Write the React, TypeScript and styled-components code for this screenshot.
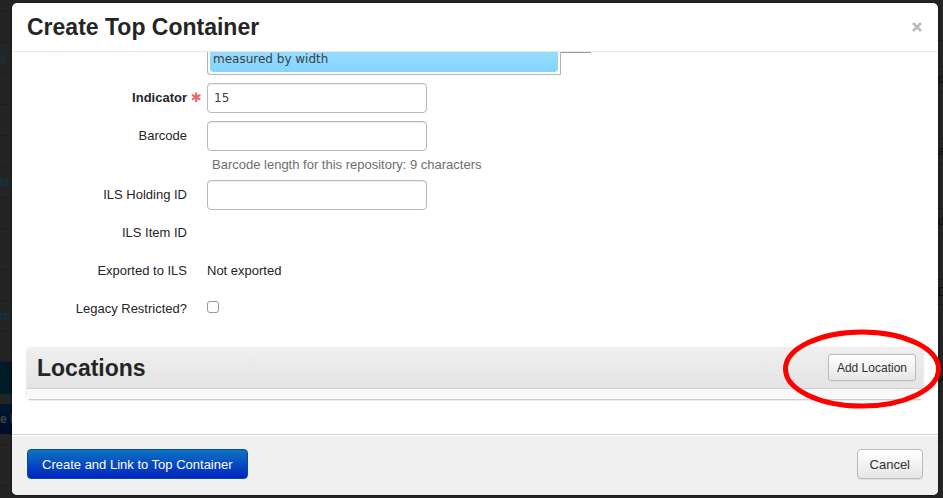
import styled, { createGlobalStyle } from "styled-components";

const App = () => {
  return (
    <Page>
      <GlobalStyle />
      <Strip aria-hidden="true">
        <StripRow $height={12} />
        <StripRow $height={31} />
        <StripRow $height={31}>s</StripRow>
        <StripRow $height={31} />
        <StripRow $height={31} />
        <StripRow $height={31} />
        <StripRow $height={31}>ts</StripRow>
        <StripRow $height={31} />
        <StripRow $height={41} />
        <StripRow $height={31} />
        <StripRow $height={31}>m</StripRow>
        <StripRow $height={30} />
        <StripBar $height={32} />
        <StripGap />
        <StripButton $height={30}>e F</StripButton>
        <StripRow $height={11} />
        <StripRow $height={41} />
      </Strip>

      <Modal role="dialog" aria-labelledby="modal-title">
        <ModalHeader>
          <Title id="modal-title">Create Top Container</Title>
          <CloseButton type="button" aria-label="Close">
            <svg width="12" height="12" viewBox="0 0 12 12">
              <path d="M2 2L10 10M10 2L2 10" stroke="#bcbcbc" strokeWidth="2.6" />
            </svg>
          </CloseButton>
        </ModalHeader>

        <ModalBody>
          <Suggestions>
            <SuggestionList role="listbox" aria-label="Container profile">
              <Suggestion role="option" aria-selected="true">measured by width</Suggestion>
            </SuggestionList>
            <FieldEdge />
          </Suggestions>

          <Form>
            <Row>
              <Label htmlFor="indicator" $required>Indicator</Label>
              <TextInput id="indicator" type="text" defaultValue="15" required />
            </Row>
            <Row>
              <Label htmlFor="barcode">Barcode</Label>
              <div>
                <TextInput id="barcode" type="text" aria-describedby="barcode-help" />
                <Help id="barcode-help">Barcode length for this repository: 9 characters</Help>
              </div>
            </Row>
            <Row>
              <Label htmlFor="holding">ILS Holding ID</Label>
              <TextInput id="holding" type="text" />
            </Row>
            <Row>
              <Label as="span">ILS Item ID</Label>
            </Row>
            <Row>
              <Label as="span">Exported to ILS</Label>
              <Value>Not exported</Value>
            </Row>
            <Row>
              <Label htmlFor="restricted">Legacy Restricted?</Label>
              <Checkbox id="restricted" type="checkbox" />
            </Row>
          </Form>

          <Panel>
            <PanelHeader>
              <Title as="h3">Locations</Title>
              <Button type="button" $small>Add Location</Button>
            </PanelHeader>
            <PanelContent />
          </Panel>
        </ModalBody>

        <ModalFooter>
          <PrimaryButton type="button">Create and Link to Top Container</PrimaryButton>
          <Button type="button">Cancel</Button>
        </ModalFooter>

        <Highlight width="160" height="82" viewBox="0 0 160 82" aria-hidden="true">
          <ellipse cx="79" cy="41" rx="76.5" ry="37" fill="none" stroke="#fe0000" strokeWidth="5" />
        </Highlight>
      </Modal>

      <Strip aria-hidden="true">
        <StripRow $height={41} />
        <StripRow $height={26} />
        <StripRow $height={25} $dark>d</StripRow>
        <StripRow $height={47} />
        <StripRow $height={25} $dark>a</StripRow>
        <StripRow $height={45} />
        <StripRow $height={25} $dark>d</StripRow>
        <StripRow $height={46} />
        <StripRow $height={25} $dark>D</StripRow>
        <StripRow $height={62} />
        <StripRow $height={25} $dark>w</StripRow>
        <StripRow $height={50} />
      </Strip>
    </Page>
  );
};

export default App;

const GlobalStyle = createGlobalStyle`
  * {
    box-sizing: border-box;
  }

  body {
    margin: 0;
    background: #222;
    color: #252525;
    font-family: "Liberation Sans", Arial, sans-serif;
    font-size: 13px;
    line-height: 20px;
  }
`;

const Page = styled.div`
  display: grid;
  grid-template-columns: 12px minmax(0, 1fr) 5px;
  min-height: 100vh;
  background: #242424;
`;

const Strip = styled.div`
  overflow: hidden;
  white-space: nowrap;
`;

const StripRow = styled.div<{ $height: number; $dark?: boolean }>`
  height: ${({ $height }) => $height}px;
  border-bottom: 1px solid #1d1d1d;
  color: ${({ $dark }) => ($dark ? "#0c0c0c" : "#0a3a50")};
  font-size: 12px;
  line-height: ${({ $height }) => $height}px;
`;

const StripBar = styled(StripRow)`
  border: 0;
  background: #001a26;
`;

const StripGap = styled.div`
  height: 10px;
`;

const StripButton = styled(StripRow)`
  border: 0;
  background: linear-gradient(#001a2c, #000a2c);
  color: #444;
  font-weight: bold;
`;

const Modal = styled.section`
  position: relative;
  display: flex;
  flex-direction: column;
  margin: 3px 0;
  border-radius: 5px;
  background: #fff;
  box-shadow: 0 0 2px #000;
`;

const ModalHeader = styled.header`
  display: flex;
  align-items: center;
  justify-content: space-between;
  height: 49px;
  padding: 0 15px;
  border-bottom: 1px solid #e8e8e8;
`;

const Title = styled.h2`
  margin: 0;
  font-size: 23px;
  line-height: 30px;
`;

const CloseButton = styled.button`
  display: flex;
  padding: 0;
  border: 0;
  background: none;
`;

const ModalBody = styled.div`
  flex: 1;
  padding: 0 15px;
`;

const Suggestions = styled.div`
  display: flex;
  padding-left: 180px;
`;

const SuggestionList = styled.ul`
  width: 354px;
  margin: 0;
  padding: 0 2px 2px;
  border: 1px solid #b4b4b4;
  border-top: 0;
  border-bottom-left-radius: 4px;
  list-style: none;
`;

const Suggestion = styled.li`
  padding: 0 3px 5px;
  border-radius: 0 0 4px 4px;
  background: linear-gradient(#97dcfe, #82d5ff);
  color: #404040;
  font-family: "DejaVu Sans", sans-serif;
  font-size: 12px;
  line-height: 15px;
`;

const FieldEdge = styled.div`
  width: 30px;
  border-top: 1px solid #999;
`;

const Form = styled.form`
  display: flex;
  flex-direction: column;
  gap: 8px;
  padding-top: 8px;
`;

const Row = styled.div`
  display: grid;
  grid-template-columns: 160px 1fr;
  align-items: start;
  column-gap: 20px;
  min-height: 30px;
`;

const Label = styled.label<{ $required?: boolean }>`
  padding-top: 5px;
  font-weight: ${({ $required }) => ($required ? "bold" : "normal")};
  text-align: right;

  &::after {
    content: ${({ $required }) => ($required ? '"✱"' : "none")};
    display: inline-block;
    width: 16px;
    margin: 0 -20px 0 4px;
    color: #e8686b;
    font-family: "DejaVu Sans", sans-serif;
    font-size: 13px;
    line-height: 12px;
    text-align: left;
  }
`;

const TextInput = styled.input`
  display: block;
  width: 220px;
  height: 30px;
  padding: 4px 6px;
  border: 1px solid #b8b8b8;
  border-radius: 4px;
  background: #fff;
  box-shadow: inset 0 1px 1px #eee;
  color: #404040;
  font-family: "DejaVu Sans", sans-serif;
  font-size: 12px;
  line-height: 20px;
`;

const Help = styled.p`
  margin: 7px 0 0 5px;
  color: #6e6e6e;
  line-height: 14px;
`;

const Value = styled.span`
  padding-top: 5px;
`;

const Checkbox = styled.input`
  appearance: none;
  width: 12px;
  height: 12px;
  margin: 7px 0 0;
  border: 1px solid #999;
  border-radius: 3px;
  background: #fff;
`;

const Panel = styled.section`
  margin: 23px 0 34px;
  border-radius: 4px;
  box-shadow: 0 1px 2px #bbb;
`;

const PanelHeader = styled.header`
  display: flex;
  align-items: center;
  justify-content: space-between;
  height: 42px;
  padding: 0 7px 0 10px;
  border-bottom: 1px solid #d3d3d3;
  border-radius: 4px 4px 0 0;
  background: linear-gradient(#efefef, #e4e4e4);
`;

const PanelContent = styled.div`
  height: 10px;
  background: #f9f9f9;
`;

const Button = styled.button<{ $small?: boolean }>`
  height: ${({ $small }) => ($small ? "27px" : "30px")};
  padding: 0 ${({ $small }) => ($small ? "8px" : "12px")};
  border: 1px solid #bbb;
  border-radius: ${({ $small }) => ($small ? "3px" : "4px")};
  background: linear-gradient(#fff, #e6e6e6);
  box-shadow: 0 1px 1px #ddd;
  color: #303030;
  font-family: inherit;
  font-size: ${({ $small }) => ($small ? "12px" : "13px")};
`;

const PrimaryButton = styled(Button)`
  padding: 0 14px;
  border-color: #064b93;
  background: linear-gradient(#0c73c2, #0024c0);
  box-shadow: none;
  color: #fff;
`;

const ModalFooter = styled.footer`
  display: flex;
  align-items: flex-start;
  justify-content: space-between;
  padding: 14px 15px 16px;
  border-top: 1px solid #d2d2d2;
  border-radius: 0 0 5px 5px;
  background: #f0f0f0;
  box-shadow: inset 0 1px 0 #fff;
`;

const Highlight = styled.svg`
  position: absolute;
  right: -5px;
  bottom: 85px;
  pointer-events: none;
`;
